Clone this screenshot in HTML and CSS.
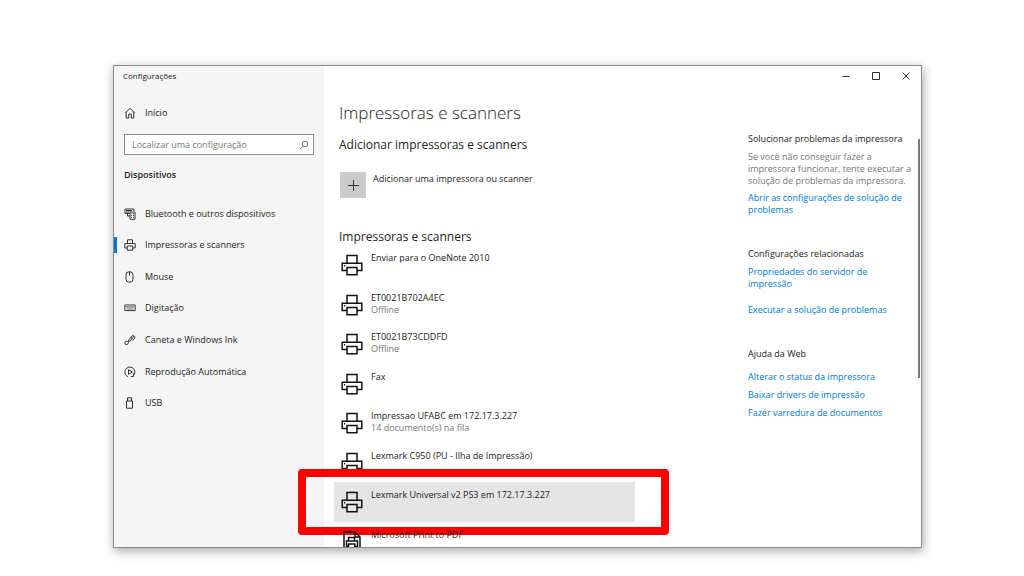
FILE: index.html
```html
<!DOCTYPE html>
<html lang="pt-BR">
<head>
<meta charset="utf-8">
<title>Configurações</title>
<link rel="stylesheet" href="styles.css">
</head>
<body>
<svg class="defs" aria-hidden="true">
  <symbol id="printer" viewBox="0 0 22 22">
    <path d="M6 9V1.500h10V9M5.500 16.500H1.200V9.200h19.600v7.300h-4.300M6 13.500h10v7.300H6z"/>
    <path d="M3 11.700h1.200"/>
  </symbol>
</svg>
<div class="window">
  <aside class="sidebar">
    <div class="app-title">Configurações</div>
    <a class="nav-link home" href="#">
      <svg class="nav-icon" viewBox="0 0 12 12"><path d="M1.500 5.500L6 1.500l4.500 4M2.200 5v6h2.500V7.200h2.600V11h2.500V5"/></svg>
      <span>Início</span>
    </a>
    <div class="search">
      <input type="text" aria-label="Localizar uma configuração" placeholder="Localizar uma configuração">
      <svg class="search-icon" viewBox="0 0 10 10"><circle cx="6" cy="4" r="2.800"/><path d="M4 6L1 9.200"/></svg>
    </div>
    <h2 class="nav-heading">Dispositivos</h2>
    <nav class="nav">
      <a class="nav-link" href="#">
        <svg class="nav-icon" viewBox="0 0 12 12"><path d="M5.500 5.500H1V1h9v2M2 2.500h6M2 4h3.500M6 4h5v7.300H6zM7.200 5.700h.8M9 5.700h1M7.200 7.500h.8M9 7.500h1M7.200 9.300h.8M9 9.300h1M3.500 6v2H6"/></svg>
        <span>Bluetooth e outros dispositivos</span>
      </a>
      <a class="nav-link current" href="#" aria-current="page">
        <svg class="nav-icon" viewBox="0 0 12 12"><path d="M3.500 4.500V.8h5v3.700M3 9H.8V4.600h10.400V9H9M3.300 7h5.400v4.200H3.300z"/></svg>
        <span>Impressoras e scanners</span>
      </a>
      <a class="nav-link" href="#">
        <svg class="nav-icon" viewBox="0 0 12 12"><rect x="2" y=".8" width="7" height="10.400" rx="3"/><path d="M5.500 1v3.500"/></svg>
        <span>Mouse</span>
      </a>
      <a class="nav-link" href="#">
        <svg class="nav-icon" viewBox="0 0 12 12"><path d="M.8 3h10.400v5.600H.8z"/><path class="keys" d="M2 4.700h8M2 5.900h8M3 7.200h6"/></svg>
        <span>Digitação</span>
      </a>
      <a class="nav-link" href="#">
        <svg class="nav-icon" viewBox="0 0 12 12"><path d="M4.500 8C3 6.400.8 7.300.8 9s2.200 2.200 3.200.8S3.800 6.800 5.200 5.300l3.300-3.700c.8-.8 1.800.1 1.100 1L6.200 7c-.8.900-1.700.2-1.200-.8M9.800 2.600c1.700-.3 1.500 1.200.5 2.200L8.500 6.500M6.800 3.300l1.500 1.300"/></svg>
        <span>Caneta e Windows Ink</span>
      </a>
      <a class="nav-link" href="#">
        <svg class="nav-icon" viewBox="0 0 12 12"><path d="M4.200 10.800A5 5 0 1 1 9.300 9.700M9.500 7.500v3H6.800M4.500 3.700v4.600L8.300 6z"/></svg>
        <span>Reprodução Automática</span>
      </a>
      <a class="nav-link" href="#">
        <svg class="nav-icon" viewBox="0 0 12 12"><path d="M3.500 4V.8h4V4M2.500 4h6v7.200h-6zM4.700 2.300h.3M6.200 2.300h.3"/></svg>
        <span>USB</span>
      </a>
    </nav>
  </aside>

  <div class="page">
    <div class="titlebar">
      <button type="button" aria-label="Minimizar"><svg viewBox="0 0 8 8"><path d="M.5 4.500h7"/></svg></button>
      <button type="button" aria-label="Maximizar"><svg viewBox="0 0 8 8"><path d="M.5.500h7v7h-7z"/></svg></button>
      <button type="button" aria-label="Fechar"><svg viewBox="0 0 8 8"><path d="M.6.6l6.800 6.800M7.400.6L.6 7.400"/></svg></button>
    </div>
    <div class="content">
      <main class="main">
        <h1>Impressoras e scanners</h1>
        <h2 class="section-title">Adicionar impressoras e scanners</h2>
        <button type="button" class="add">
          <span class="add-tile"><svg viewBox="0 0 12 12"><path d="M6.500 1v11M1 6.500h11"/></svg></span>
          <span>Adicionar uma impressora ou scanner</span>
        </button>
        <h2 class="section-title">Impressoras e scanners</h2>
        <ul class="printers">
          <li><svg class="printer-icon"><use href="#printer"/></svg><div>Enviar para o OneNote 2010</div></li>
          <li><svg class="printer-icon"><use href="#printer"/></svg><div>ET0021B702A4EC<small>Offline</small></div></li>
          <li><svg class="printer-icon"><use href="#printer"/></svg><div>ET0021B73CDDFD<small>Offline</small></div></li>
          <li><svg class="printer-icon"><use href="#printer"/></svg><div>Fax</div></li>
          <li><svg class="printer-icon"><use href="#printer"/></svg><div>Impressao UFABC em 172.17.3.227<small>14 documento(s) na fila</small></div></li>
          <li><svg class="printer-icon"><use href="#printer"/></svg><div>Lexmark C950 (PU - Ilha de Impressão)</div></li>
          <li class="selected"><svg class="printer-icon"><use href="#printer"/></svg><div>Lexmark Universal v2 PS3 em 172.17.3.227</div><span class="marker"></span></li>
          <li><svg class="printer-icon" viewBox="0 0 22 22"><path d="M3 22V1h11l5 5v16M14 1v5h5M7.500 10V6.500h6V10M7 15.500H5.500V10h11v5.500H14M7.500 13h6.300v5H7.500z"/></svg><div>Microsoft Print to PDF</div></li>
        </ul>
      </main>
      <aside class="help">
        <section>
          <h3>Solucionar problemas da impressora</h3>
          <p>Se você não conseguir fazer a impressora funcionar, tente executar a solução de problemas da impressora.</p>
          <a href="#">Abrir as configurações de solução de problemas</a>
        </section>
        <section class="related">
          <h3>Configurações relacionadas</h3>
          <a href="#">Propriedades do servidor de impressão</a>
          <a href="#">Executar a solução de problemas</a>
        </section>
        <section class="web">
          <h3>Ajuda da Web</h3>
          <a href="#">Alterar o status da impressora</a>
          <a href="#">Baixar drivers de impressão</a>
          <a href="#">Fazer varredura de documentos</a>
        </section>
      </aside>
      <div class="scroll-thumb"></div>
    </div>
  </div>
</div>
</body>
</html>
```

FILE: styles.css
```css
* { box-sizing: border-box; }

body {
  margin: 0;
  height: 100vh;
  padding: 65px 102px 28px 113px;
  display: flex;
  background: #fff;
  color: #222;
  font: 9px/12px "Open Sans", "Noto Sans", sans-serif;
}

h1, h2, h3, p, ul { margin: 0; padding: 0; }
button { font: inherit; color: inherit; border: 0; padding: 0; background: none; }
a { color: #0078d7; text-decoration: none; }
svg { fill: none; stroke: #333; stroke-width: 1; flex: none; }
.defs { position: absolute; width: 0; height: 0; }

.window {
  flex: 1;
  display: flex;
  overflow: hidden;
  border: 1px solid #8c8c8c;
  background: #fff;
  box-shadow: 1px 3px 10px rgba(0, 0, 0, 0.35);
}

/* Sidebar */
.sidebar {
  flex: 0 0 210px;
  padding: 4px 10px 0 0;
  background: #f5f5f5;
}
.app-title { padding-left: 9px; font-size: 8px; }
.nav-link {
  display: flex;
  align-items: center;
  gap: 9px;
  padding-left: 10px;
  color: #222;
}
.nav-icon { width: 12px; height: 12px; }
.nav-icon .keys { stroke: #888; }
.home { margin-top: 25px; }
.search {
  display: flex;
  align-items: center;
  margin: 15px 0 0 10px;
  height: 21px;
  padding: 0 4px 0 7px;
  border: 1px solid #8a8a8a;
  background: #fff;
}
.search input {
  flex: 1;
  min-width: 0;
  padding: 0;
  border: 0;
  outline: 0;
  background: none;
  font: inherit;
}
.search input::placeholder { color: #767676; opacity: 1; }
.search-icon { width: 10px; height: 10px; stroke: #777; }
.nav-heading { margin: 14px 0 17px 10px; font-size: 9px; line-height: 12px; font-weight: 600; }
.nav { display: grid; grid-auto-rows: 1fr; height: 221px; }
.nav .current {
  background: linear-gradient(#0078d7, #0078d7) left center / 3px 16px no-repeat;
}

/* Page */
.page { flex: 1; min-width: 0; display: flex; flex-direction: column; }
.titlebar { display: flex; justify-content: flex-end; height: 20px; }
.titlebar button { width: 30px; display: grid; place-items: center; }
.titlebar svg { width: 8px; height: 8px; }
.content { flex: 1; min-height: 0; display: flex; padding-left: 10px; }
.main { flex: 0 0 301px; padding-top: 15px; }
h1 { padding-left: 5px; font-size: 17px; line-height: 24px; font-weight: 300; }
.section-title { padding-left: 5px; font-size: 12px; line-height: 16px; font-weight: 400; }
h1 + .section-title { margin-top: 12px; }
.add { display: flex; gap: 7px; margin: 19px 0 31px 6px; text-align: left; line-height: 14px; }
.add-tile { width: 26px; height: 26px; display: grid; place-items: center; background: #ccc; }
.add-tile svg { width: 12px; height: 12px; }

.printers { display: grid; grid-auto-rows: 1fr; height: 316px; list-style: none; }
.printers li { position: relative; display: flex; gap: 8px; padding: 7px 0 0 7px; }
.printers small { display: block; font-size: 9px; color: #767676; }
.printer-icon { width: 22px; height: 22px; margin-top: 2px; stroke-width: 1.500; stroke: #111; }
.printers .selected { background: #e5e5e5; }
.marker {
  position: absolute;
  inset: -13px -34px -13px -36px;
  border: 8px solid #f00;
  border-radius: 4px;
}

/* Help column */
.help { margin-left: auto; width: 166px; padding-top: 47px; }
.help h3 { font-size: 9px; line-height: 12px; font-weight: 400; }
.help p { margin: 6px 0 5px; color: #767676; }
.help a { display: block; }
.related { width: 150px; margin-top: 32px; }
.related a { margin-top: 6px; }
.related a + a { margin-top: 14px; }
.web { margin-top: 32px; }
.web h3 { margin-bottom: 11px; }
.web a + a { margin-top: 6px; }
.scroll-thumb { width: 2px; height: 239px; margin: 53px 1px 0 4px; background: #7a7a7a; }
```
